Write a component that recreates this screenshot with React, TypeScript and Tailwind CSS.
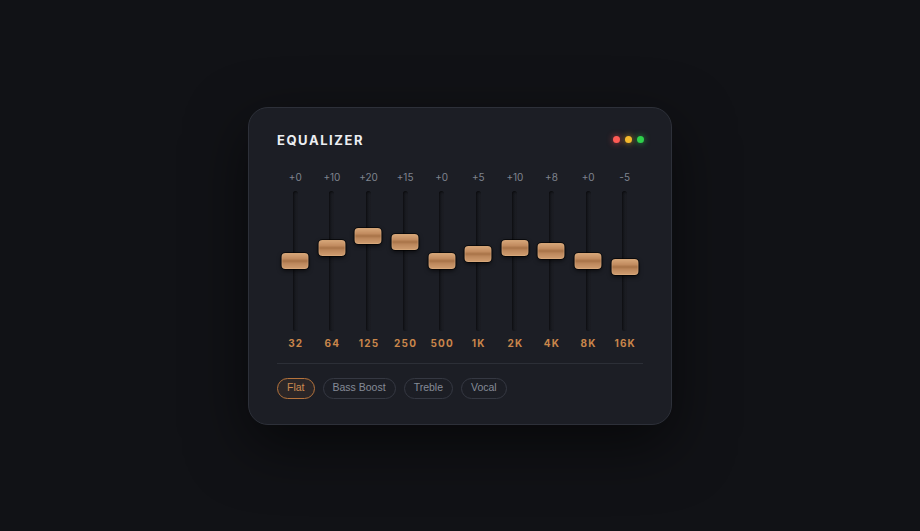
import React from "react";

const bands = [
  { f: "32", v: 0 },
  { f: "64", v: 10 },
  { f: "125", v: 20 },
  { f: "250", v: 15 },
  { f: "500", v: 0 },
  { f: "1K", v: 5 },
  { f: "2K", v: 10 },
  { f: "4K", v: 8 },
  { f: "8K", v: 0 },
  { f: "16K", v: -5 },
];

const presets = ["Flat", "Bass Boost", "Treble", "Vocal"];

function fmt(v: number) {
  return v >= 0 ? `+${v}` : `${v}`;
}

function Slider({ v }: { v: number }) {
  const travel = 124;
  const top = (1 - (v + 50) / 100) * travel;
  return (
    <div className="relative h-[140px] w-full flex justify-center">
      <div className="w-[5px] h-full rounded-full bg-[linear-gradient(90deg,#111216,#191b21_60%,#22242c)] shadow-[inset_0_1px_2px_rgba(0,0,0,0.6)]" />
      <div
        className="absolute left-1/2 -translate-x-1/2 w-[27px] h-[16px] rounded-[4px] border border-[#dcae80]/50 bg-[linear-gradient(180deg,#d4a376_0%,#c28c60_32%,#a77248_50%,#bb865b_66%,#cd9a6d_100%)] shadow-[0_0_0_1px_rgba(0,0,0,0.6),0_2px_4px_rgba(0,0,0,0.6)]"
        style={{ top }}
      />
    </div>
  );
}

export default function App() {
  return (
    <div
      className="h-screen w-full flex items-center justify-center bg-[#111216]"
      style={{ fontFamily: "Inter, 'Noto Sans', sans-serif" }}
    >
      <div className="w-[424px] h-[318px] rounded-[20px] border border-[#2d3039] bg-[#1c1e25] px-[28px] pt-[25px] shadow-[0_20px_60px_rgba(0,0,0,0.55)] flex flex-col">
        <div className="flex items-center justify-between h-[14px]">
          <div className="text-[13px] leading-[14px] font-bold tracking-[0.12em] text-[#eceef2]">
            EQUALIZER
          </div>
          <div className="flex items-center gap-[5px] mr-[-1px]">
            <div className="w-[7px] h-[7px] rounded-full bg-[#ff5b55] shadow-[0_0_6px_rgba(255,80,80,0.7)]" />
            <div className="w-[7px] h-[7px] rounded-full bg-[#f6b92c] shadow-[0_0_6px_rgba(246,185,44,0.7)]" />
            <div className="w-[7px] h-[7px] rounded-full bg-[#2ed04b] shadow-[0_0_6px_rgba(46,208,75,0.7)]" />
          </div>
        </div>

        <div className="grid grid-cols-10 mt-[24px]">
          {bands.map((b) => (
            <div key={b.f} className="flex flex-col items-center">
              <div className="text-[10px] leading-[12px] text-[#7f848f]">{fmt(b.v)}</div>
              <div className="mt-[8px] w-full">
                <Slider v={b.v} />
              </div>
              <div className="mt-[6px] text-[10px] leading-[12px] font-bold tracking-[0.12em] text-[#c9864b] pl-[1px]">
                {b.f}
              </div>
            </div>
          ))}
        </div>

        <div className="mt-[14px] h-px bg-[#2c2f37]" />

        <div
          className="flex gap-[8px] mt-[14px]"
          style={{ fontFamily: "'Liberation Sans', Arial, sans-serif" }}
        >
          {presets.map((p, i) => (
            <div
              key={p}
              className={
                i === 0
                  ? "h-[21px] px-[9px] rounded-full border border-[#b5733c] bg-[#b5733c]/10 text-[#cc8a50] text-[10.5px] flex items-center"
                  : "h-[21px] px-[9px] rounded-full border border-[#353842] text-[#858b97] text-[10.5px] flex items-center"
              }
            >
              {p}
            </div>
          ))}
        </div>
      </div>
    </div>
  );
}
